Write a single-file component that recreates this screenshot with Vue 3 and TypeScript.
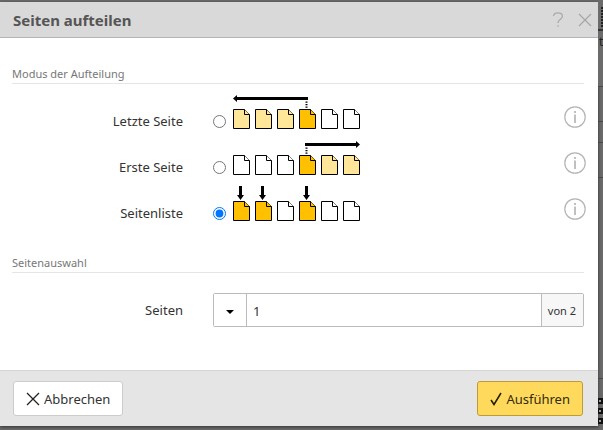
<script setup lang="ts">
import { ref } from 'vue'

type Fill = 'full' | 'light' | 'none'
interface Mode {
  id: string
  label: string
  pages: Fill[]
}

const modes: Mode[] = [
  { id: 'last', label: 'Letzte Seite', pages: ['light', 'light', 'light', 'full', 'none', 'none'] },
  { id: 'first', label: 'Erste Seite', pages: ['none', 'none', 'none', 'full', 'light', 'light'] },
  { id: 'list', label: 'Seitenliste', pages: ['full', 'full', 'none', 'full', 'none', 'none'] },
]
const mode = ref('list')
const pages = ref('1')
const listArrows = [0, 1, 3]
</script>

<template>
  <div class="backdrop">
    <section class="dialog" role="dialog" aria-labelledby="dialog-title">
      <header class="head">
        <h1 id="dialog-title">Seiten aufteilen</h1>
        <button type="button" class="tool" aria-label="Hilfe">
          <svg width="12" height="16" viewBox="0 0 12 16" fill="none" stroke="#aaa" stroke-width="1.3">
            <path d="M1.5 4C1.7 1.8 3.4.8 5.8.8C8.5.8 10.4 2.1 10.4 4.3C10.4 7.3 6 7.3 6 11" />
            <path d="M6 13.2V14.8" />
          </svg>
        </button>
        <button type="button" class="tool" aria-label="Schließen">
          <svg width="14" height="14" viewBox="0 0 14 14" fill="none" stroke="#a6a6a6" stroke-width="1.2">
            <path d="M1 1L13 13M13 1L1 13" />
          </svg>
        </button>
      </header>

      <div class="body">
        <h2 id="mode-title">Modus der Aufteilung</h2>
        <div class="modes" role="radiogroup" aria-labelledby="mode-title">
          <div v-for="m in modes" :key="m.id" class="row">
            <label class="name" :for="m.id">{{ m.label }}</label>
            <input :id="m.id" v-model="mode" type="radio" name="mode" :value="m.id" />
            <svg class="picture" width="128" height="35" viewBox="0 0 128 35" aria-hidden="true">
              <g v-if="m.id === 'last'">
                <path d="M0 4.5L4 1V3H75V6H4V8Z" />
                <path class="dots" d="M73.5 7.5V14" />
              </g>
              <g v-else-if="m.id === 'first'">
                <path d="M127 4.5L123 1V3H72V6H123V8Z" />
                <path class="dots" d="M73.5 7.5V14" />
              </g>
              <g v-else>
                <path
                  v-for="n in listArrows"
                  :key="n"
                  :transform="`translate(${n * 22} 0)`"
                  d="M6 0H9V9H11L7.5 14L4 9H6Z"
                />
              </g>
              <g
                v-for="(fill, i) in m.pages"
                :key="i"
                class="page"
                :class="fill"
                :transform="`translate(${i * 22} 15)`"
              >
                <path d="M.5 .5H11.5L16.5 5.5V19.5H.5Z" />
                <path d="M11.5 .5V5.5H16.5" />
              </g>
            </svg>
            <button type="button" class="info" :aria-label="`Info zu ${m.label}`">
              <svg width="22" height="22" viewBox="0 0 22 22" fill="none" stroke="#b4b4b4">
                <circle cx="11" cy="11" r="10.2" stroke-width="1.2" />
                <path d="M11 5V7M11 8.5V17" stroke="#a6a6a6" stroke-width="1.4" />
              </svg>
            </button>
          </div>
        </div>

        <h2>Seitenauswahl</h2>
        <div class="selection">
          <label class="name" for="pages">Seiten</label>
          <div class="group">
            <button type="button" class="drop" aria-label="Auswahl öffnen">
              <svg width="8" height="4" viewBox="0 0 8 4"><path d="M0 0H8L4 4Z" /></svg>
            </button>
            <input id="pages" v-model="pages" type="text" />
            <span class="total">von 2</span>
          </div>
        </div>
      </div>

      <footer class="foot">
        <button type="button" class="action">
          <svg width="14" height="14" viewBox="0 0 14 14" fill="none" stroke="#222" stroke-width="1.3">
            <path d="M1 1L13 13M13 1L1 13" />
          </svg>
          Abbrechen
        </button>
        <button type="button" class="action primary">
          <svg width="12" height="14" viewBox="0 0 12 14" fill="none" stroke="#221c00" stroke-width="1.5">
            <path d="M1 8L4 12.5L11 1" />
          </svg>
          Ausführen
        </button>
      </footer>
    </section>

    <svg class="behind" width="5" height="430" viewBox="0 0 5 430" aria-hidden="true">
      <path d="M0 0H5V29H0ZM0 31H5V86H0Z" fill="#6b6b6b" />
      <path d="M0 30H5" stroke="#333" stroke-width="2" />
      <path d="M4 7V27" stroke="#222" stroke-width="2" stroke-dasharray="2 1" />
      <text x="1" y="46" font-size="12" fill="#222">t</text>
      <path d="M0 86.5H5M0 121.5H5M0 142.5H5M0 177.5H5M0 378.5H5" stroke="#484848" />
      <path d="M0 398H5V404H0ZM0 408H5V414H0ZM0 418H5V424H0Z" fill="#111" />
      <path d="M1 400H3V402H1ZM1 410H3V412H1ZM1 420H3V422H1Z" fill="#999" />
    </svg>
  </div>
</template>

<style>
body {
  background: #6a6a6a;
}
</style>

<style scoped>
.backdrop {
  display: flex;
  align-items: flex-start;
  min-height: 100vh;
  background: #6a6a6a;
  font-family: "Noto Sans", "Open Sans", sans-serif;
  font-size: 13px;
  line-height: 20px;
  color: #333;
}
.dialog {
  flex: 1;
  min-width: 0;
  margin-top: 2px;
  background: #fff;
  box-shadow: 0 1px 3px #333;
}
.behind {
  flex: none;
}
button {
  font: inherit;
  color: inherit;
  cursor: pointer;
}
svg {
  display: block;
}
.head {
  display: flex;
  align-items: center;
  gap: 14px;
  height: 35px;
  padding: 0 6px 0 13px;
  background: #d9d9d9;
  border-bottom: 1px solid #b5b5b5;
}
h1 {
  flex: 1;
  margin: 0;
  font-size: 15px;
  font-weight: 700;
  color: #555;
}
.tool,
.info {
  padding: 0;
  border: 0;
  background: none;
}
.body {
  padding: 27px 14px 43px 12px;
}
h2 {
  margin: 0;
  border-bottom: 1px solid #e5e5e5;
  font-size: 11px;
  line-height: 18px;
  font-weight: 400;
  color: #777;
}
.modes {
  padding: 10px 0 22px;
}
.row {
  display: flex;
  align-items: flex-start;
  height: 46px;
}
.name {
  flex: none;
  width: 171px;
  text-align: right;
}
.row .name {
  padding-top: 17px;
}
.row input {
  flex: none;
  width: 13px;
  height: 13px;
  margin: 21px 7px 0 30px;
}
.row .info {
  margin: 12px -2px 0 auto;
}
.dots {
  fill: none;
  stroke: #000;
  stroke-width: 2;
  stroke-dasharray: 1.3 1.2;
}
.page path {
  fill: inherit;
  stroke: #000;
}
.page.full {
  fill: #ffc000;
}
.page.light {
  fill: #ffe699;
}
.page.none {
  fill: #fff;
}
.selection {
  display: flex;
  align-items: center;
  gap: 30px;
  padding-top: 20px;
}
.group {
  display: flex;
  flex: 1;
  min-width: 0;
  height: 32px;
  border: 1px solid #bbb;
  border-radius: 2px;
}
.drop {
  display: flex;
  align-items: center;
  justify-content: center;
  width: 33px;
  padding: 4px 0 0;
  border: 0;
  border-right: 1px solid #bbb;
  background: #fff;
}
.group input {
  flex: 1;
  min-width: 0;
  padding: 2px 6px 0;
  border: 0;
  outline: 0;
  font: inherit;
  color: inherit;
}
.total {
  padding: 7px 7px 0 6px;
  border-left: 1px solid #bbb;
  background: #f7f7f7;
  font-size: 11px;
}
.foot {
  display: flex;
  justify-content: space-between;
  padding: 10px 15px 10px 13px;
  background: #e5e5e5;
  border-top: 1px solid #d5d5d5;
}
.action {
  display: flex;
  align-items: center;
  gap: 4px;
  height: 35px;
  padding: 0 12px;
  border: 1px solid #ccc;
  border-radius: 3px;
  background: #fff;
  font-size: 13px;
}
.primary {
  border-color: #bd9c35;
  background: #ffd95c;
  color: #332b0d;
}
</style>
